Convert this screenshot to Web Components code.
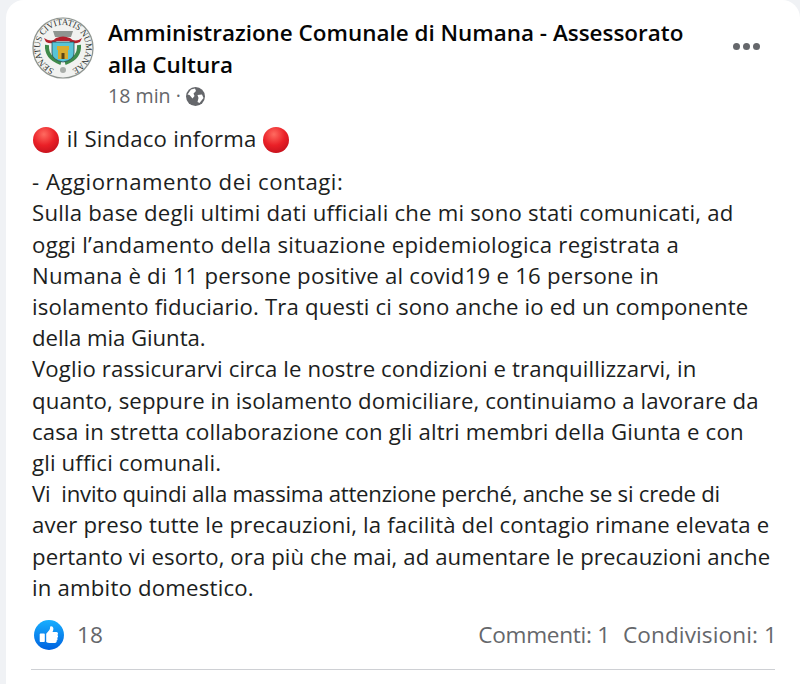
<!DOCTYPE html>
<html>
<head>
<meta charset="utf-8">
<style>
  html, body { margin: 0; height: 100%; background: #f0f2f5; overflow: hidden; }
</style>
</head>
<body>
<fb-post>
  <fb-header slot="header" title-text="Amministrazione Comunale di Numana - Assessorato alla Cultura" time="18 min"></fb-header>
  <p><fb-dot></fb-dot> <span style="letter-spacing:.22px">il Sindaco informa</span> <fb-dot></fb-dot></p>
  <p>
    <fb-line ls=".5">- Aggiornamento dei contagi:</fb-line>
    <fb-line ls=".21">Sulla base degli ultimi dati ufficiali che mi sono stati comunicati, ad</fb-line>
    <fb-line ls=".28">oggi l’andamento della situazione epidemiologica registrata a</fb-line>
    <fb-line ls=".22">Numana è di 11 persone positive al covid19 e 16 persone in</fb-line>
    <fb-line ls=".15">isolamento fiduciario. Tra questi ci sono anche io ed un componente</fb-line>
    <fb-line ls="-.06">della mia Giunta.</fb-line>
    <fb-line ls=".12">Voglio rassicurarvi circa le nostre condizioni e tranquillizzarvi, in</fb-line>
    <fb-line ls=".1">quanto, seppure in isolamento domiciliare, continuiamo a lavorare da</fb-line>
    <fb-line ls=".17">casa in stretta collaborazione con gli altri membri della Giunta e con</fb-line>
    <fb-line ls=".15">gli uffici comunali.</fb-line>
    <fb-line ls="-.25">Vi &nbsp;invito quindi alla massima attenzione perché, anche se si crede di</fb-line>
    <fb-line ls=".135">aver preso tutte le precauzioni, la facilità del contagio rimane elevata e</fb-line>
    <fb-line ls=".085">pertanto vi esorto, ora più che mai, ad aumentare le precauzioni anche</fb-line>
    <fb-line ls=".2">in ambito domestico.</fb-line>
  </p>
  <fb-stats slot="footer" likes="18" comments="1" shares="1"></fb-stats>
</fb-post>

<script>
const FONT = '"Open Sans", "Noto Sans", sans-serif'

customElements.define('fb-post',
  class extends HTMLElement {
    constructor () {
      super()
      this.attachShadow({ mode: 'open' })
      this.shadowRoot.innerHTML = `
        <style>
          :host {
            display: block;
            box-sizing: border-box;
            height: 684px;
            margin-left: 6px;
            padding: 0 25px 0 25px;
            background: #fff;
            border-radius: 18px 18px 0 0;
            font-family: ${FONT};
            font-size: 22.2px;
            line-height: 31.2px;
            color: #1c1e21;
          }
          main { padding-top: 11px; padding-left: 1px; }
          ::slotted(p) { margin: 0 0 12px; white-space: nowrap; }
        </style>
        <slot name="header"></slot>
        <main><slot></slot></main>
        <slot name="footer"></slot>
      `
    }
  }
)

// one line of the post body, spacing tuned per line
customElements.define('fb-line',
  class extends HTMLElement {
    constructor () {
      super()
      this.attachShadow({ mode: 'open' })
      this.shadowRoot.innerHTML = `
        <style>
          :host { display: block; }
        </style>
        <slot></slot>
      `
    }

    connectedCallback () {
      this.style.letterSpacing = this.getAttribute('ls') + 'px'
    }
  }
)

customElements.define('fb-header',
  class extends HTMLElement {
    constructor () {
      super()
      this.attachShadow({ mode: 'open' })
      this.shadowRoot.innerHTML = `
        <style>
          :host { display: flex; padding-top: 17px; padding-left: 1px; }
          .who { flex: 1; margin-left: 14px; }
          h1 {
            margin: 0;
            font-size: 22.45px;
            line-height: 31.5px;
            font-weight: 600;
            color: #050505;
            width: 600px;
          }
          .meta {
            display: flex;
            align-items: center;
            gap: 5px;
            font-size: 19.6px;
            line-height: 32px;
            color: #65676b;
          }
          .more { display: flex; gap: 3px; margin: 26px 15px 0 0; height: 8px; }
          .more i { width: 7px; height: 7px; border-radius: 50%; background: #65676b; }
        </style>
        <fb-seal></fb-seal>
        <div class="who">
          <h1>${this.getAttribute('title-text')}</h1>
          <div class="meta">${this.getAttribute('time')} ·
            <svg width="19" height="19" viewBox="0 0 19 19">
              <circle cx="9.5" cy="9.5" r="9.5" fill="#65676b"/>
              <path d="M5 2.500 L9 1.500 L10 4 L7.500 6.500 L8.500 9 L6.500 11.500 L3.500 8 L1.500 7.500 Z" fill="#fff"/>
              <path d="M11.500 8 L16 7.500 L17.500 11 L13.500 16 L11.500 15 L12.500 11 Z" fill="#fff"/>
            </svg>
          </div>
        </div>
        <div class="more"><i></i><i></i><i></i></div>
      `
    }
  }
)

// municipal seal, ring of text around a small coat of arms
customElements.define('fb-seal',
  class extends HTMLElement {
    constructor () {
      super()
      this.attachShadow({ mode: 'open' })
      this.shadowRoot.innerHTML = `
        <style>
          :host { display: block; width: 62px; height: 62px; flex: none; }
          svg { display: block; }
          text { font-family: "Liberation Serif", serif; font-size: 8.800px; fill: #2f3330; }
        </style>
        <svg width="62" height="62" viewBox="0 0 62 62">
          <circle cx="31" cy="31" r="31" fill="#f1f2f0"/>
          <circle cx="31" cy="31" r="30" fill="none" stroke="#8d938f" stroke-width="1.200"/>
          <defs><path id="ring" d="M31 54 A23 23 0 1 1 31.010 54"/></defs>
          <text><textPath href="#ring" startOffset="9" textLength="126">SENATUS CIVITATIS NUMANAE</textPath></text>
          <circle cx="31" cy="53" r="3" fill="#a9ada9"/>
          <path d="M21 14 h20 l-2 6 h-16 z" fill="#8f9590"/>
          <path d="M12 21 q8 5 12 0 q7 -3 14 0 q5 5 12 0 l-2 4 q-7 3 -11 -1 h-12 q-5 4 -11 1 z" fill="#b3202c"/>
          <path d="M15 28 q-1 13 14 18 M47 28 q1 13 -14 18" fill="none" stroke="#3e8a4a" stroke-width="4"/>
          <path d="M20 25 h22 v11 q0 7 -11 9 q-11 -2 -11 -9 z" fill="#58c4d6" stroke="#274a52" stroke-width=".8"/>
          <path d="M26 42 v-9 h-1 v-4 h12 v4 h-1 v9 z" fill="#d9ac2e"/>
          <rect x="29.500" y="36" width="3" height="6" fill="#5a4416"/>
        </svg>
      `
    }
  }
)

customElements.define('fb-dot',
  class extends HTMLElement {
    constructor () {
      super()
      this.attachShadow({ mode: 'open' })
      this.shadowRoot.innerHTML = `
        <style>
          :host { display: inline-block; width: 26px; height: 26px; vertical-align: -6px; margin: 0 2px 0 1px; }
          svg { display: block; }
        </style>
        <svg width="26" height="26" viewBox="0 0 26 26">
          <defs>
            <radialGradient id="red" cx="42%" cy="28%" r="78%">
              <stop offset="0" stop-color="#ff6b60"/>
              <stop offset=".55" stop-color="#ea2027"/>
              <stop offset="1" stop-color="#c3101c"/>
            </radialGradient>
          </defs>
          <circle cx="13" cy="13" r="13" fill="url(#red)"/>
        </svg>
      `
    }
  }
)

customElements.define('fb-stats',
  class extends HTMLElement {
    constructor () {
      super()
      this.attachShadow({ mode: 'open' })
      this.shadowRoot.innerHTML = `
        <style>
          :host {
            display: flex;
            align-items: center;
            margin-top: 12px;
            height: 40px;
            padding-bottom: 14px;
            border-bottom: 1px solid #ced0d4;
            color: #65676b;
            font-size: 22.6px;
          }
          .likes { display: flex; align-items: center; gap: 13px; flex: 1; margin-left: 3px; }
          .counts { display: flex; gap: 13px; margin-right: -2px; }
          .comments { letter-spacing: -.27px; }
          .shares { letter-spacing: .1px; }
          svg { display: block; }
        </style>
        <div class="likes">
          <svg width="30" height="30" viewBox="0 0 30 30">
            <defs>
              <linearGradient id="blue" x1="0" y1="0" x2="0" y2="1">
                <stop offset="0" stop-color="#18afff"/>
                <stop offset="1" stop-color="#0062df"/>
              </linearGradient>
            </defs>
            <circle cx="15" cy="15" r="15" fill="url(#blue)"/>
            <path d="M6.500 13.500 h3.500 a.8 .8 0 0 1 .8 .8 v7 a.8 .8 0 0 1 -.8 .8 h-3.500 a.8 .8 0 0 1 -.8 -.8 v-7 a.8 .8 0 0 1 .8 -.8 z" fill="#fff"/>
            <path d="M12.200 13.800 l3 -3.600 c.6 -.8 .9 -1.700 .9 -3 c0 -1.500 3.300 -1.400 3.300 1.600 c0 1.300 -.4 2.400 -.9 3.200 h3.700 c2 0 2.300 2.200 1.200 3 c1 .8 .9 2.300 -.2 2.900 c.7 .9 .4 2.200 -.6 2.700 c.4 1.200 -.4 2.400 -1.800 2.400 h-5.300 c-1.300 0 -2.300 -.4 -3.300 -1 z" fill="#fff"/>
          </svg>
          <span>${this.getAttribute('likes')}</span>
        </div>
        <div class="counts">
          <span class="comments">Commenti: ${this.getAttribute('comments')}</span>
          <span class="shares">Condivisioni: ${this.getAttribute('shares')}</span>
        </div>
      `
    }
  }
)
</script>
</body>
</html>
